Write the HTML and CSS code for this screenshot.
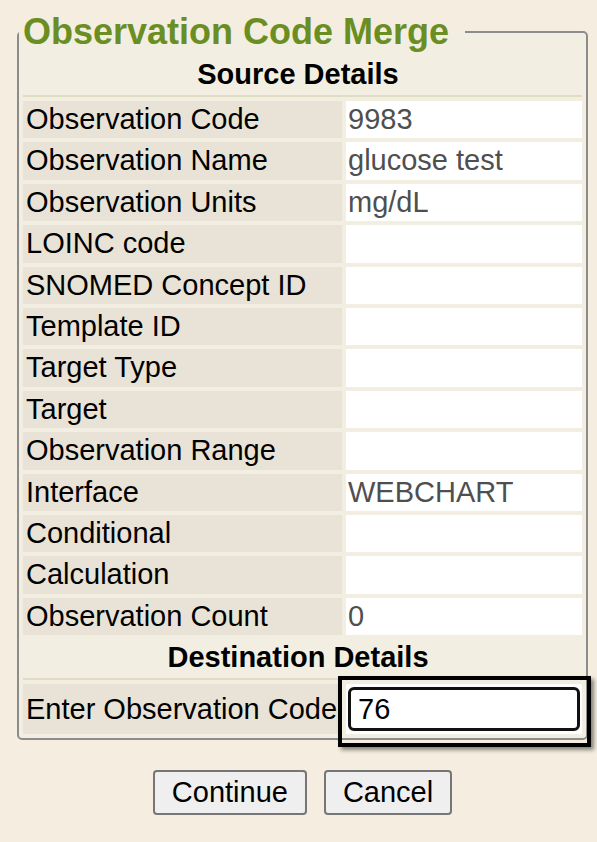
FILE: index.html
```html
<!DOCTYPE html>
<html lang="en">
<head>
<meta charset="utf-8">
<title>Observation Code Merge</title>
<link rel="stylesheet" href="styles.css">
</head>
<body>
<form class="merge">
  <fieldset class="box">
    <legend class="title">Observation Code Merge</legend>
    <table class="grid">
      <tr><th colspan="2" class="section">Source Details</th></tr>
      <tr><td class="label">Observation Code</td><td class="value">9983</td></tr>
      <tr><td class="label">Observation Name</td><td class="value">glucose test</td></tr>
      <tr><td class="label">Observation Units</td><td class="value">mg/dL</td></tr>
      <tr><td class="label">LOINC code</td><td class="value"></td></tr>
      <tr><td class="label">SNOMED Concept ID</td><td class="value"></td></tr>
      <tr><td class="label">Template ID</td><td class="value"></td></tr>
      <tr><td class="label">Target Type</td><td class="value"></td></tr>
      <tr><td class="label">Target</td><td class="value"></td></tr>
      <tr><td class="label">Observation Range</td><td class="value"></td></tr>
      <tr><td class="label">Interface</td><td class="value">WEBCHART</td></tr>
      <tr><td class="label">Conditional</td><td class="value"></td></tr>
      <tr><td class="label">Calculation</td><td class="value"></td></tr>
      <tr><td class="label">Observation Count</td><td class="value">0</td></tr>
      <tr><th colspan="2" class="section">Destination Details</th></tr>
      <tr class="dest">
        <td class="label">Enter Observation Code</td>
        <td class="value-input"><span class="focus-wrap"><input class="code-input" type="text" value="76"></span></td>
      </tr>
    </table>
  </fieldset>
  <div class="actions">
    <button type="button" class="btn">Continue</button>
    <button type="button" class="btn">Cancel</button>
  </div>
</form>
</body>
</html>
```

FILE: styles.css
```css
html, body {
  margin: 0;
  padding: 0;
  background: #f4ede0;
}

body {
  font-family: "Liberation Sans", Arial, sans-serif;
  font-size: 29px;
  color: #000;
}

.merge {
  margin: 0;
  padding: 0 0 0 17px;
  width: 571px;
}

.box {
  margin: 11px 0 0 0;
  padding: 0;
  border: 2px solid #8c8c8c;
  border-radius: 5px;
  background: #f2efe2;
  min-width: 0;
}

.title {
  margin: 0;
  padding: 0 16px 0 4px;
  font-size: 36px;
  line-height: 41px;
  font-weight: bold;
  color: #6b8e23;
}

.grid {
  width: 100%;
  border-collapse: separate;
  border-spacing: 4px;
}

.section {
  padding: 2px 9px 4px 0;
  line-height: 33px;
  font-weight: bold;
  text-align: center;
  border-bottom: 2px solid #e0dec2;
}

.label {
  width: 313px;
  padding: 2px 3px;
  line-height: 33.4px;
  background: #e8e3d6;
  white-space: nowrap;
  vertical-align: middle;
}

.value {
  padding: 2px 2px;
  line-height: 33.4px;
  background: #fff;
  color: #4f4f4f;
  white-space: nowrap;
}

.value-input {
  padding: 3px 2px;
  background: #fff;
}

.focus-wrap {
  position: relative;
  display: block;
}

.focus-wrap::after {
  content: "";
  position: absolute;
  top: -11px;
  left: -10px;
  right: -11px;
  bottom: -16px;
  border: 4px solid #000;
  box-shadow: 3px 3px 4px rgba(0, 0, 0, 0.45);
  pointer-events: none;
}

.code-input {
  display: block;
  box-sizing: border-box;
  width: 100%;
  height: 44px;
  margin: 0;
  padding: 0 7px;
  border: 3px solid #111;
  border-radius: 6px;
  background: #fff;
  font-family: "Liberation Sans", Arial, sans-serif;
  font-size: 29px;
  color: #000;
  outline: none;
}

.actions {
  display: flex;
  justify-content: center;
  gap: 17px;
  margin-top: 30px;
}

.btn {
  margin: 0;
  padding: 4px 17px;
  border: 2px solid #767676;
  border-radius: 4px;
  background: #efefef;
  font-family: "Liberation Sans", Arial, sans-serif;
  font-size: 29px;
  line-height: 33px;
  color: #000;
}
```
